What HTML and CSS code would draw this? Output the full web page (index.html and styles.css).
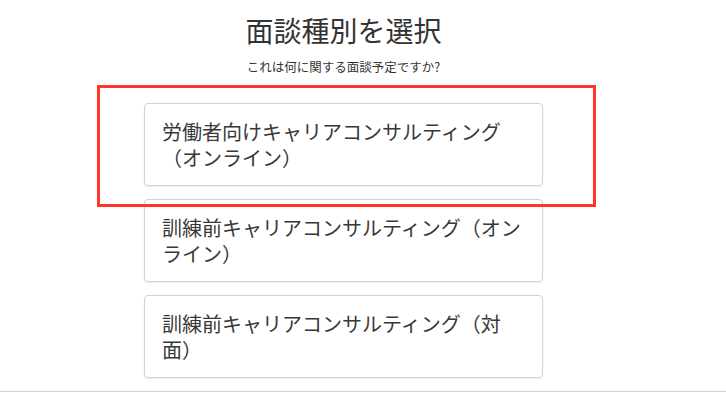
FILE: index.html
```html
<!DOCTYPE html>
<html lang="ja">
<head>
    <meta charset="UTF-8">
    <meta name="viewport" content="width=device-width, initial-scale=1.0">
    <title>面談種別を選択</title>
    <link rel="stylesheet" href="styles.css">
</head>
<body>
    <div class="main">
        <h1 class="title">面談種別を選択</h1>
        <p class="subtitle">これは何に関する面談予定ですか?</p>

        <div class="options">
            <button class="option">労働者向けキャリアコンサルティング（オンライン）</button>
            <button class="option">訓練前キャリアコンサルティング（オンライン）</button>
            <button class="option">訓練前キャリアコンサルティング（対面）</button>
        </div>
    </div>

    <div class="footer"></div>

    <!-- 注目枠 -->
    <div class="highlight"></div>
</body>
</html>
```

FILE: styles.css
```css
body {
    font-family: "Noto Sans CJK JP", "Noto Sans", sans-serif;
    margin: 0;
    background-color: white;
    color: #333;
    position: relative;
}

.main {
    width: 687px;
    text-align: center;
}

.title {
    font-size: 28px;
    font-weight: normal;
    line-height: 36px;
    margin: 12px 0 0;
}

.subtitle {
    font-size: 12.5px;
    line-height: 18px;
    margin: 10px 0 0;
}

.options {
    display: flex;
    flex-direction: column;
    align-items: center;
    gap: 13px;
    margin-top: 27px;
}

.option {
    width: 399px;
    box-sizing: border-box;
    padding: 15px 16px 14px 17px;
    border: 1px solid #d2d2d2;
    border-radius: 4px;
    background-color: white;
    box-shadow: 0 1px 2px rgba(0, 0, 0, 0.08);
    font-family: inherit;
    font-size: 20px;
    line-height: 26px;
    color: #383838;
    text-align: left;
    text-spacing-trim: space-all;
    cursor: pointer;
}

.footer {
    margin-top: 13px;
    border-top: 1px solid #d0d0d0;
    height: 20px;
}

.highlight {
    position: absolute;
    left: 97px;
    top: 85px;
    width: 499px;
    height: 122px;
    box-sizing: border-box;
    border: 3px solid #ff3527;
    pointer-events: none;
}
```
